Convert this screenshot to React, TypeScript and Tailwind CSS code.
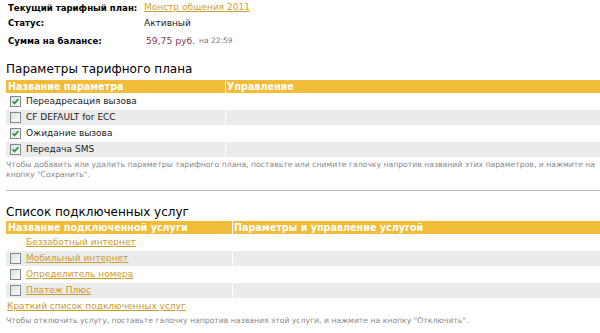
import React from "react";

function Box({ checked }: { checked?: boolean }) {
  return (
    <svg width="11" height="11" viewBox="0 0 11 11" className="shrink-0">
      <defs>
        <linearGradient id="cbg" x1="0" y1="0" x2="1" y2="1">
          <stop offset="0" stopColor="#dcdcd6" />
          <stop offset="1" stopColor="#ffffff" />
        </linearGradient>
      </defs>
      <rect x="0.5" y="0.5" width="10" height="10" fill="url(#cbg)" stroke="#7f8a94" />
      {checked && (
        <path d="M2.6 5.4 L4.5 7.4 L8.4 3.2" fill="none" stroke="#2f9a3c" strokeWidth="1.7" />
      )}
    </svg>
  );
}

const params: { name: string; checked: boolean }[] = [
  { name: "Переадресация вызова", checked: true },
  { name: "CF DEFAULT for ECC", checked: false },
  { name: "Ожидание вызова", checked: true },
  { name: "Передача SMS", checked: true },
];

const services: { name: string; box: boolean }[] = [
  { name: "Беззаботный интернет", box: false },
  { name: "Мобильный интернет", box: true },
  { name: "Определитель номера", box: true },
  { name: "Платеж Плюс", box: true },
];

export default function App() {
  return (
    <div className="w-[600px] h-[333px] overflow-hidden bg-white text-[9px] text-[#222] font-['DejaVu_Sans',Verdana,sans-serif]">
      {/* top info */}
      <div className="pl-[8px] whitespace-nowrap">
        <div className="flex items-center h-[16px]">
          <span className="w-[136px] shrink-0 font-bold text-[8.6px] text-black">Текущий тарифный план:</span>
          <a className="text-[#cda02c] underline">Монстр общения 2011</a>
        </div>
        <div className="flex items-center h-[15px]">
          <span className="w-[136px] shrink-0 font-bold text-[8.6px] text-black">Статус:</span>
          <span>Активный</span>
        </div>
        <div className="flex items-center h-[20px]">
          <span className="w-[138px] shrink-0 font-bold text-[8.6px] text-black">Сумма на балансе:</span>
          <span className="text-[#8a3a5c] text-[9.2px]">59,75 руб.</span>
          <span className="ml-[4px] text-[7.5px] text-[#777]">на 22:59</span>
        </div>
      </div>

      {/* section 1 */}
      <div className="h-[29px] pt-[10px] pl-[6px] text-[12px] leading-[16px] text-black">
        Параметры тарифного плана
      </div>
      <div className="ml-[6px] grid grid-cols-[219px_1fr] gap-px">
        <div className="h-[13px] bg-[#f0bc3a] text-white font-bold text-[9.6px] leading-[13px] pl-[2px]">Название параметра</div>
        <div className="h-[13px] bg-[#f0bc3a] text-white font-bold text-[9.6px] leading-[13px] pl-[1px]">Управление</div>
        {params.map((p, i) => (
          <React.Fragment key={p.name}>
            <div className={`h-[15px] flex items-center pl-[4px] gap-[5px] ${i % 2 ? "bg-[#ebebeb]" : "bg-white"}`}>
              <Box checked={p.checked} />
              <span className="leading-[15px]">{p.name}</span>
            </div>
            <div className={`h-[15px] ${i % 2 ? "bg-[#ebebeb]" : "bg-white"}`} />
          </React.Fragment>
        ))}
      </div>
      <div className="pl-[6px] pt-[3px] text-[7.7px] leading-[10px] text-[#888] h-[33px]">
        Чтобы добавить или удалить параметры тарифного плана, поставьте или снимите галочку напротив названий этих параметров, и нажмите на
        <br />
        кнопку "Сохранить".
      </div>
      <div className="ml-[6px] h-px bg-[#bdbdbd]" />

      {/* section 2 */}
      <div className="h-[30px] pt-[13px] pl-[6px] text-[12px] leading-[16px] text-black">
        Список подключенных услуг
      </div>
      <div className="ml-[6px] grid grid-cols-[226px_1fr] gap-px">
        <div className="h-[13px] bg-[#f0bc3a] text-white font-bold text-[9.6px] leading-[13px] pl-[2px]">Название подключенной услуги</div>
        <div className="h-[13px] bg-[#f0bc3a] text-white font-bold text-[9.6px] leading-[13px] pl-[1px]">Параметры и управление услугой</div>
        {services.map((s, i) => (
          <React.Fragment key={s.name}>
            <div className={`h-[15px] flex items-center pl-[4px] gap-[5px] ${i % 2 ? "bg-[#ebebeb]" : "bg-white"}`}>
              {s.box ? <Box /> : <span className="w-[11px] shrink-0" />}
              <a className="leading-[15px] text-[#cd9a2c] underline">{s.name}</a>
            </div>
            <div className={`h-[15px] ${i % 2 ? "bg-[#ebebeb]" : "bg-white"}`} />
          </React.Fragment>
        ))}
      </div>
      <div className="pl-[7px] pt-[1px] leading-[14px]">
        <a className="text-[#cd9a2c] underline">Краткий список подключенных услуг</a>
      </div>
      <div className="pl-[6px] pt-[3px] text-[7.7px] leading-[10px] text-[#888]">
        Чтобы отключить услугу, поставьте галочку напротив названия этой услуги, и нажмите на кнопку "Отключить".
      </div>
    </div>
  );
}
